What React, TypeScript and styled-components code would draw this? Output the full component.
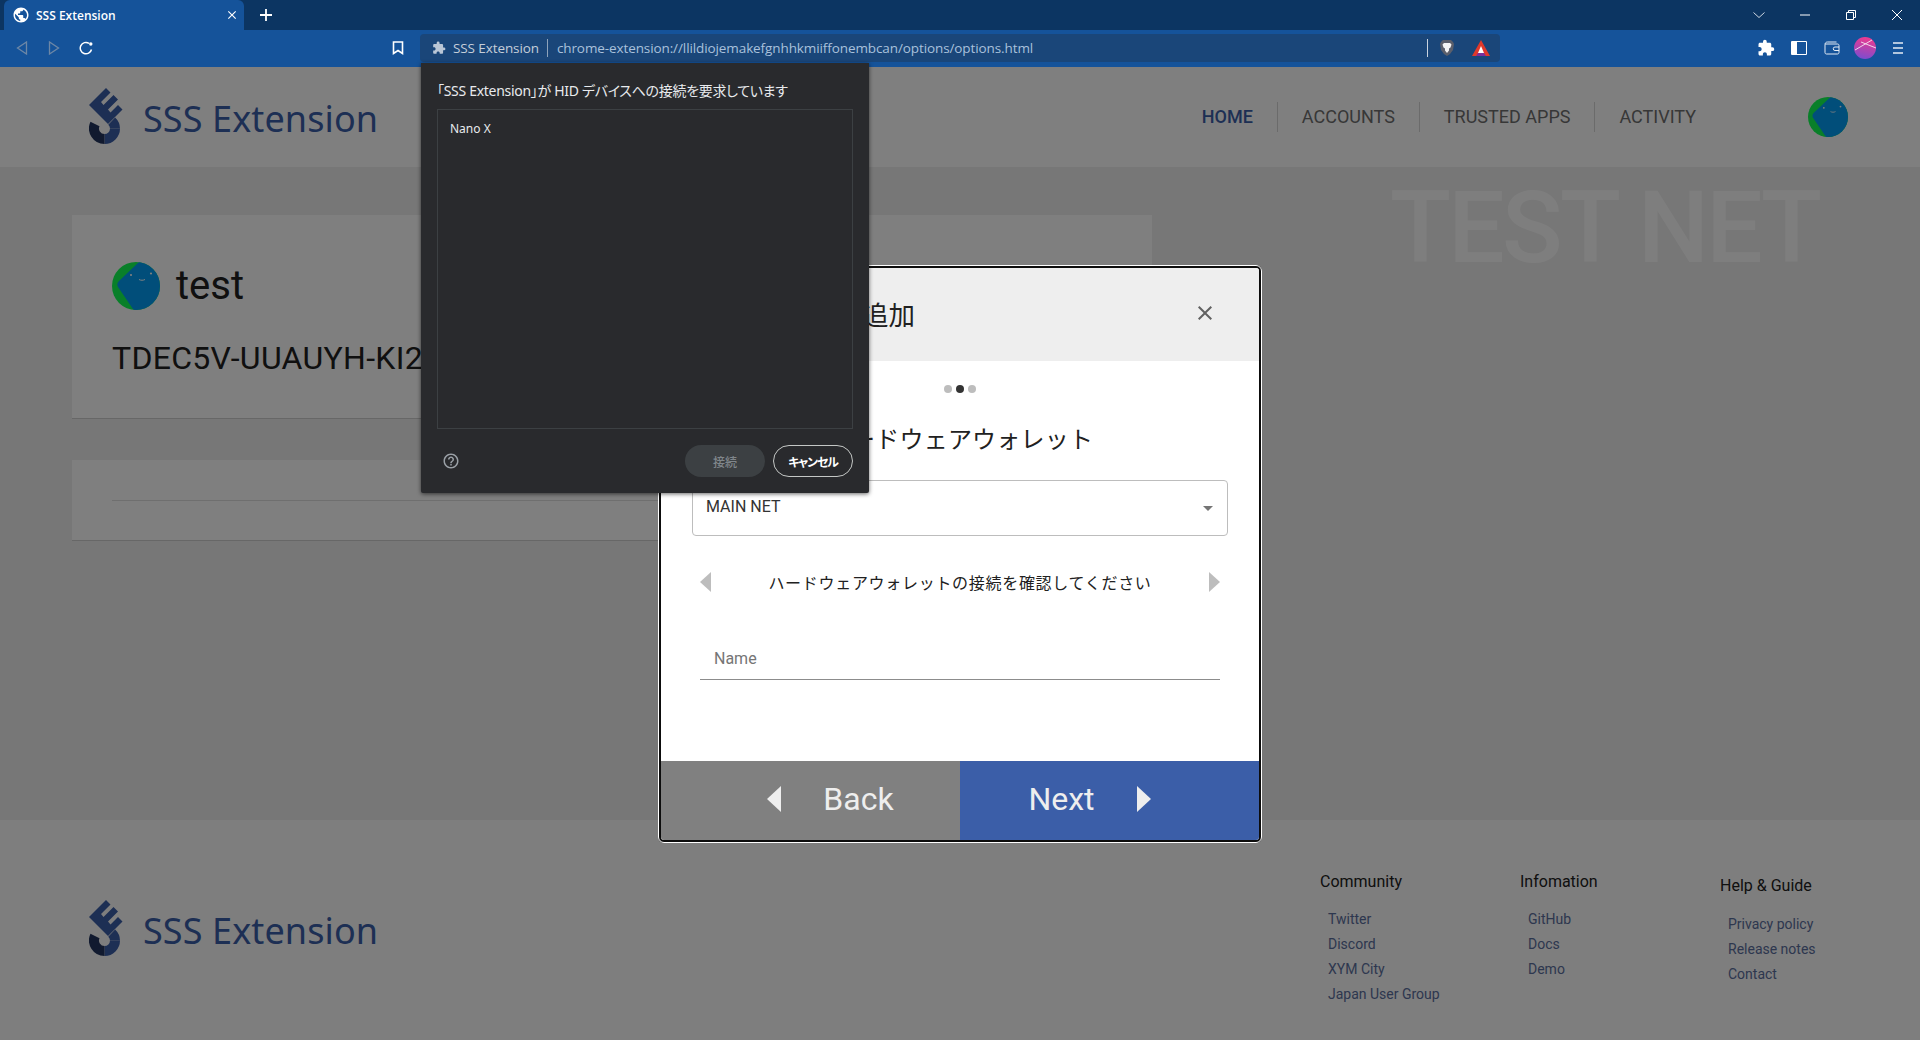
import React from 'react';
import styled, { createGlobalStyle } from 'styled-components';
import { MdExtension, MdOutlineHelpOutline, MdClose, MdPublic } from 'react-icons/md';

const GlobalStyle = createGlobalStyle`
  html, body {
    margin: 0;
    padding: 0;
    height: 100%;
    overflow: hidden;
    background: #eeeeee;
    font-family: Roboto, "Noto Sans CJK JP", sans-serif;
  }
  * {
    box-sizing: border-box;
  }
`;

const Root = styled.div`
  width: 1920px;
  height: 1040px;
  display: flex;
  flex-direction: column;
  position: relative;
  overflow: hidden;
`;

/* browser chrome */
const TabStrip = styled.div`
  height: 30px;
  flex: none;
  background: #0c3562;
  display: flex;
  align-items: stretch;
  padding-left: 4px;
  color: #fff;
`;

const Tab = styled.div`
  width: 240px;
  background: #15539a;
  border-radius: 6px 6px 0 0;
  display: flex;
  align-items: center;
  padding: 0 5px 0 8px;
  gap: 6px;
`;

const TabTitle = styled.span`
  flex: 1;
  font: 600 12px "Open Sans", "Noto Sans", sans-serif;
  color: #fff;
`;

const NewTab = styled.div`
  width: 44px;
  display: flex;
  align-items: center;
  justify-content: center;
`;

const WindowControls = styled.div`
  margin-left: auto;
  display: flex;
  align-items: center;
`;

const WindowButton = styled.div`
  width: 46px;
  height: 28px;
  display: flex;
  align-items: center;
  justify-content: center;
`;

const Toolbar = styled.div`
  height: 37px;
  flex: none;
  background: #15539a;
  display: flex;
  align-items: center;
  padding-bottom: 1px;
  color: #fff;
`;

const NavButtons = styled.div`
  display: flex;
  align-items: center;
  width: 420px;
  padding-left: 6px;
`;

const ToolButton = styled.div`
  width: 32px;
  height: 28px;
  display: flex;
  align-items: center;
  justify-content: center;
`;

const BookmarkButton = styled(ToolButton)`
  margin-left: auto;
  margin-right: 6px;
`;

const Omnibox = styled.div`
  width: 1080px;
  height: 28px;
  background: #1a4679;
  border-radius: 4px;
  display: flex;
  align-items: center;
  padding-left: 12px;
  font: 400 13.5px "Open Sans", "Noto Sans", sans-serif;
  color: #b9c6d6;
`;

const OriginName = styled.span`
  margin-left: 7px;
  color: #c5ced9;
  letter-spacing: -0.1px;
`;

const OmniDivider = styled.span`
  width: 1px;
  height: 18px;
  background: #8ea3bb;
  margin: 0 9px 0 8px;
`;

const UrlText = styled.span`
  color: #a9c1dc;
  letter-spacing: -0.1px;
`;

const ShieldGroup = styled.div`
  margin-left: auto;
  display: flex;
  align-items: center;
  gap: 18px;
  padding-right: 10px;
`;

const ShieldDivider = styled.span`
  width: 1px;
  height: 18px;
  background: #c9d3df;
  margin-right: -6px;
`;

const ToolbarRight = styled.div`
  flex: 1;
  display: flex;
  align-items: center;
  justify-content: flex-end;
  gap: 1px;
  padding-right: 6px;
`;

/* extension page */
const Page = styled.div`
  flex: 1;
  position: relative;
  display: flex;
  flex-direction: column;
  min-height: 0;
  background: #eeeeee;
`;

const Header = styled.header`
  height: 100px;
  flex: none;
  background: #fff;
  display: flex;
  align-items: center;
  padding-left: 89px;
`;

const Brand = styled.div`
  display: flex;
  align-items: center;
  gap: 20px;
`;

const BrandName = styled.span`
  padding-top: 2px;
  font: 400 36px "Noto Sans", sans-serif;
  color: #3b5ea8;
  letter-spacing: 0.1px;
  white-space: nowrap;
`;

const Nav = styled.nav`
  margin-left: auto;
  display: flex;
  align-items: center;
`;

const NavItem = styled.a<{ $active?: boolean; $last?: boolean }>`
  height: 30px;
  display: flex;
  align-items: center;
  padding: 0 24px 2px;
  font-size: 18px;
  font-weight: ${(p) => (p.$active ? 500 : 400)};
  color: ${(p) => (p.$active ? '#3b5ea8' : '#6f6f6f')};
  border-right: ${(p) => (p.$last ? 'none' : '1px solid #d6d6d6')};
`;

const NavAvatar = styled.div`
  margin: 0 72px 0 88px;
  display: flex;
`;

const Main = styled.main`
  flex: 1;
  position: relative;
  padding: 48px 0 0 72px;
  display: flex;
  flex-direction: column;
  gap: 41px;
`;

const Watermark = styled.div`
  position: absolute;
  left: 1390px;
  top: 2px;
  font-size: 100px;
  font-weight: 500;
  line-height: 117px;
  letter-spacing: -2.7px;
  color: #fdfdfd;
  white-space: nowrap;
`;

const Card = styled.section`
  width: 1080px;
  background: #fff;
  border-bottom: 1px solid #cfcfcf;
  overflow: hidden;
`;

const AccountCard = styled(Card)`
  height: 204px;
  padding: 47px 40px 0;
`;

const AccountRow = styled.div`
  display: flex;
  align-items: center;
  gap: 16px;
`;

const AccountName = styled.h2`
  margin: 0;
  font-size: 40px;
  font-weight: 400;
  line-height: 48px;
  color: #212121;
`;

const Address = styled.div`
  margin-top: 28px;
  font-size: 32px;
  line-height: 40px;
  letter-spacing: 0.3px;
  color: #212121;
  white-space: nowrap;
`;

const BalanceCard = styled(Card)`
  height: 81px;
  padding: 40px 40px 0;
`;

const BalanceRule = styled.div`
  height: 1px;
  background: #dedede;
`;

const Footer = styled.footer`
  height: 220px;
  flex: none;
  background: #fcfcfc;
  display: flex;
  padding-left: 89px;
`;

const FooterBrand = styled(Brand)`
  margin-top: -2px;
`;

const FooterColumns = styled.div`
  margin-left: auto;
  display: flex;
`;

const FooterColumn = styled.div<{ $offset?: number }>`
  width: 200px;
  padding-top: ${(p) => 52 + (p.$offset || 0)}px;
`;

const FooterHeading = styled.h3<{ $gap?: number }>`
  margin: 0 0 ${(p) => p.$gap || 15}px;
  font-size: 16px;
  font-weight: 400;
  line-height: 20px;
  color: #212121;
`;

const FooterLink = styled.a`
  display: block;
  margin-left: 8px;
  font-size: 14px;
  line-height: 25px;
  color: #5b6f9e;
  white-space: nowrap;
`;

const Dimmer = styled.div`
  position: absolute;
  inset: 0;
  background: rgba(0, 0, 0, 0.5);
  display: flex;
  align-items: center;
  justify-content: center;
`;

/* add account modal */
const Modal = styled.div`
  width: 604px;
  height: 578px;
  background: #fff;
  border: 3px solid #0d0d0d;
  outline: 1px solid #fff;
  outline-offset: -1px;
  border-radius: 6px;
  overflow: hidden;
  display: flex;
  flex-direction: column;
`;

const ModalHeader = styled.div`
  height: 93px;
  flex: none;
  background: #eeeeee;
  display: flex;
  align-items: center;
  justify-content: space-between;
  padding: 0 42px 0 42px;
`;

const ModalTitle = styled.h2`
  margin: 0 0 1px;
  font: 400 26.5px "Noto Sans CJK JP", sans-serif;
  color: #212121;
`;

const CloseButton = styled.div`
  color: #616161;
  display: flex;
  margin-top: -2px;
`;

const ModalBody = styled.div`
  flex: 1;
  display: flex;
  flex-direction: column;
  align-items: center;
  padding-top: 24px;
`;

const Dots = styled.div`
  display: flex;
  gap: 4px;
  height: 8px;
`;

const Dot = styled.span<{ $active?: boolean }>`
  width: 8px;
  height: 8px;
  border-radius: 50%;
  background: ${(p) => (p.$active ? '#333' : '#bdbdbd')};
`;

const StepTitle = styled.h3`
  margin: 27px 0 0;
  font: 400 24px/36px "Noto Sans CJK JP", sans-serif;
  letter-spacing: 0.2px;
  color: #212121;
`;

const SelectBox = styled.div`
  width: 536px;
  height: 56px;
  margin-top: 24px;
  border: 1px solid #bdbdbd;
  border-radius: 4px;
  display: flex;
  align-items: center;
  justify-content: space-between;
  padding: 0 14px 2px 13px;
  font-size: 16px;
  color: #333;
`;

const SelectArrow = styled.span`
  width: 0;
  height: 0;
  border-left: 5px solid transparent;
  border-right: 5px solid transparent;
  border-top: 5px solid #757575;
  margin-top: 4px;
`;

const Carousel = styled.div`
  width: 520px;
  height: 20px;
  margin-top: 36px;
  display: flex;
  align-items: center;
  justify-content: space-between;
`;

const CarouselText = styled.span`
  font: 400 16px "Noto Sans CJK JP", sans-serif;
  letter-spacing: 0.7px;
  color: #212121;
`;

const Arrow = styled.span<{ $dir: 'left' | 'right'; $size: number; $color: string }>`
  width: 0;
  height: 0;
  border-top: ${(p) => p.$size}px solid transparent;
  border-bottom: ${(p) => p.$size}px solid transparent;
  ${(p) =>
    p.$dir === 'left'
      ? `border-right: ${Math.round(p.$size * 1.05)}px solid ${p.$color};`
      : `border-left: ${Math.round(p.$size * 1.05)}px solid ${p.$color};`}
`;

const NameField = styled.div`
  width: 520px;
  height: 40px;
  margin-top: 48px;
  border-bottom: 1px solid #8c8c8c;
  padding: 9px 0 0 14px;
  font-size: 16px;
  line-height: 20px;
  color: #757575;
`;

const ModalFooter = styled.div`
  height: 79px;
  flex: none;
  display: flex;
`;

const FooterAction = styled.div<{ $primary?: boolean }>`
  flex: 1;
  background: ${(p) => (p.$primary ? '#3b5ea8' : '#808080')};
  color: #eeeeee;
  font-size: 32px;
  display: flex;
  align-items: center;
  justify-content: center;
  gap: 42px;
  padding: ${(p) => (p.$primary ? '0 40px 2px 0' : '0 0 2px 40px')};
`;

/* Chrome HID device chooser */
const Chooser = styled.div`
  position: absolute;
  left: 421px;
  top: 63px;
  width: 448px;
  height: 430px;
  background: #292a2d;
  border-radius: 0 0 2px 2px;
  box-shadow: 0 1px 4px rgba(0, 0, 0, 0.6);
  padding: 18px 16px 16px;
  display: flex;
  flex-direction: column;
  font-family: "Noto Sans", "Noto Sans CJK JP", sans-serif;
`;

const ChooserTitle = styled.div`
  font-size: 14px;
  line-height: 20px;
  font-feature-settings: 'palt';
  letter-spacing: -0.3px;
  color: #e8eaed;
  white-space: nowrap;
`;

const DeviceList = styled.div`
  height: 320px;
  flex: none;
  margin-top: 8px;
  border: 1px solid #3c4043;
  padding: 10px 12px;
  font-size: 12px;
  line-height: 18px;
  color: #e8eaed;
`;

const ChooserFooter = styled.div`
  flex: 1;
  display: flex;
  align-items: flex-end;
  gap: 8px;
  color: #9aa0a6;
`;

const HelpIcon = styled.div`
  margin: 0 auto 7px 5px;
  display: flex;
`;

const PillButton = styled.div<{ $disabled?: boolean }>`
  width: 80px;
  height: 32px;
  border-radius: 16px;
  display: flex;
  align-items: center;
  justify-content: center;
  font: ${(p) => (p.$disabled ? 500 : 700)} 12px "Noto Sans CJK JP", sans-serif;
  font-feature-settings: 'palt';
  letter-spacing: ${(p) => (p.$disabled ? '0' : '-1.2px')};
  background: ${(p) => (p.$disabled ? '#3c4043' : 'transparent')};
  color: ${(p) => (p.$disabled ? '#80868b' : '#ffffff')};
  border: ${(p) => (p.$disabled ? 'none' : '1px solid #c4c7c5')};
`;

function SssLogo() {
  return (
    <svg width="34" height="58" viewBox="0 0 34 58" fill="none">
      <path
        d="M0 17 17 0l4.500 4.500-9.500 9.500 2.500 3 10-10 4.500 4.500-10 10 2.500 3L29 17l4.500 4.500L19 36 0 17Z"
        fill="#3b5ea8"
      />
      <path d="M26 40.500a10.500 10.500 0 0 1-10.500 10.500" stroke="#3b5ea8" strokeWidth="10" />
      <path d="M26 40.500c0-3-1.300-5.600-3.300-7.500" stroke="#3b5ea8" strokeWidth="10" />
      <path d="M15.500 51A10.500 10.500 0 0 1 6 36" stroke="#23355f" strokeWidth="10" />
    </svg>
  );
}

function Avatar({ size }: { size: number }) {
  return (
    <svg width={size} height={size} viewBox="0 0 48 48">
      <defs>
        <clipPath id={`avatar-${size}`}>
          <circle cx="24" cy="24" r="24" />
        </clipPath>
      </defs>
      <g clipPath={`url(#avatar-${size})`}>
        <rect width="48" height="48" fill="#12ff52" />
        <path d="M27 0h24v50H23L6 25c-1-2-1-4 1-6L27 0Z" fill="#029cf4" />
        <circle cx="19" cy="13" r="1.100" fill="#fff" />
        <circle cx="39" cy="11.500" r="1.100" fill="#fff" />
        <path d="M27 17.500c2 1 4 1 6 0" stroke="#fff" strokeWidth="1" fill="none" />
      </g>
    </svg>
  );
}

function BraveIcon() {
  return (
    <svg width="14" height="16" viewBox="0 0 14 16">
      <path d="M3 0h8l2 2 1 2-1 6-3 4-3 2-3-2-3-4-1-6 1-2 2-2Z" fill="#5b5f6b" />
      <path d="M4 3h6l1.500 1.500-1 3-1.500 1v2L7 13l-2-2.500v-2L3.500 7.500l-1-3L4 3Z" fill="#f4f4f4" />
    </svg>
  );
}

function RewardsIcon() {
  return (
    <svg width="18" height="16" viewBox="0 0 18 16">
      <path d="M9 0l9 16H0L9 0Z" fill="#e0392b" />
      <path d="M4 16l2-3h6l2 3H4Z" fill="#7b2d9b" />
      <path d="M9 6l3 7H6l3-7Z" fill="#fff" />
    </svg>
  );
}

function ProfileIcon() {
  return (
    <svg width="22" height="22" viewBox="0 0 22 22">
      <defs>
        <linearGradient id="profile-gradient" x1="0.6" y1="0" x2="0.4" y2="1">
          <stop offset="0" stopColor="#ef3a8e" />
          <stop offset="1" stopColor="#7d4ccf" />
        </linearGradient>
      </defs>
      <circle cx="11" cy="11" r="11" fill="url(#profile-gradient)" />
      <path d="M1 13 18 3M7 5l15 6" stroke="#f6e4f2" strokeWidth="0.9" />
    </svg>
  );
}

function AccountsPage() {
  return (
    <Page>
      <Header>
        <Brand>
          <SssLogo />
          <BrandName>SSS Extension</BrandName>
        </Brand>
        <Nav>
          <NavItem $active>HOME</NavItem>
          <NavItem>ACCOUNTS</NavItem>
          <NavItem>TRUSTED APPS</NavItem>
          <NavItem $last>ACTIVITY</NavItem>
        </Nav>
        <NavAvatar>
          <Avatar size={40} />
        </NavAvatar>
      </Header>
      <Main>
        <Watermark>TEST NET</Watermark>
        <AccountCard>
          <AccountRow>
            <Avatar size={48} />
            <AccountName>test</AccountName>
          </AccountRow>
          <Address>TDEC5V-UUAUYH-KI2LGQ-7XWNPA-3OBSFE-XYMTST</Address>
        </AccountCard>
        <BalanceCard>
          <BalanceRule />
        </BalanceCard>
      </Main>
      <Footer>
        <FooterBrand>
          <SssLogo />
          <BrandName>SSS Extension</BrandName>
        </FooterBrand>
        <FooterColumns>
          <FooterColumn>
            <FooterHeading>Community</FooterHeading>
            <FooterLink>Twitter</FooterLink>
            <FooterLink>Discord</FooterLink>
            <FooterLink>XYM City</FooterLink>
            <FooterLink>Japan User Group</FooterLink>
          </FooterColumn>
          <FooterColumn>
            <FooterHeading>Infomation</FooterHeading>
            <FooterLink>GitHub</FooterLink>
            <FooterLink>Docs</FooterLink>
            <FooterLink>Demo</FooterLink>
          </FooterColumn>
          <FooterColumn $offset={4}>
            <FooterHeading $gap={16}>Help &amp; Guide</FooterHeading>
            <FooterLink>Privacy policy</FooterLink>
            <FooterLink>Release notes</FooterLink>
            <FooterLink>Contact</FooterLink>
          </FooterColumn>
        </FooterColumns>
      </Footer>
      <Dimmer>
        <Modal>
          <ModalHeader>
            <ModalTitle>アカウントを追加</ModalTitle>
            <CloseButton>
              <MdClose size={24} />
            </CloseButton>
          </ModalHeader>
          <ModalBody>
            <Dots>
              <Dot />
              <Dot $active />
              <Dot />
            </Dots>
            <StepTitle>ハードウェアウォレット</StepTitle>
            <SelectBox>
              MAIN NET
              <SelectArrow />
            </SelectBox>
            <Carousel>
              <Arrow $dir="left" $size={10} $color="#bdbdbd" />
              <CarouselText>ハードウェアウォレットの接続を確認してください</CarouselText>
              <Arrow $dir="right" $size={10} $color="#bdbdbd" />
            </Carousel>
            <NameField>Name</NameField>
          </ModalBody>
          <ModalFooter>
            <FooterAction>
              <Arrow $dir="left" $size={13} $color="#eeeeee" />
              Back
            </FooterAction>
            <FooterAction $primary>
              Next
              <Arrow $dir="right" $size={13} $color="#eeeeee" />
            </FooterAction>
          </ModalFooter>
        </Modal>
      </Dimmer>
    </Page>
  );
}

export default function App() {
  return (
    <Root>
      <GlobalStyle />
      <TabStrip>
        <Tab>
          <MdPublic size={18} color="#fff" />
          <TabTitle>SSS Extension</TabTitle>
          <MdClose size={14} color="#fff" />
        </Tab>
        <NewTab>
          <svg width="14" height="14" viewBox="0 0 14 14">
            <path d="M7 1v12M1 7h12" stroke="#fff" strokeWidth="1.800" />
          </svg>
        </NewTab>
        <WindowControls>
          <WindowButton>
            <svg width="14" height="8" viewBox="0 0 14 8">
              <path d="M1.500 1.500 7 6.500l5.500-5" stroke="#cfd8e3" fill="none" />
            </svg>
          </WindowButton>
          <WindowButton>
            <svg width="10" height="2" viewBox="0 0 10 2">
              <path d="M0 1h10" stroke="#fff" />
            </svg>
          </WindowButton>
          <WindowButton>
            <svg width="10" height="10" viewBox="0 0 10 10">
              <path d="M.5 2.500h7v7h-7zM2.500 2.500v-2h7v7h-2" stroke="#fff" fill="none" />
            </svg>
          </WindowButton>
          <WindowButton>
            <svg width="10" height="10" viewBox="0 0 10 10">
              <path d="M0 0l10 10M10 0 0 10" stroke="#fff" />
            </svg>
          </WindowButton>
        </WindowControls>
      </TabStrip>
      <Toolbar>
        <NavButtons>
          <ToolButton>
            <svg width="12" height="14" viewBox="0 0 12 14">
              <path d="M10.500 1v12L1.500 7l9-6Z" stroke="#6d87a6" fill="none" strokeWidth="1.300" />
            </svg>
          </ToolButton>
          <ToolButton>
            <svg width="12" height="14" viewBox="0 0 12 14">
              <path d="M1.500 1v12l9-6-9-6Z" stroke="#6d87a6" fill="none" strokeWidth="1.300" />
            </svg>
          </ToolButton>
          <ToolButton>
            <svg width="14" height="14" viewBox="0 0 14 14">
              <path d="M12.500 8.500A5.700 5.700 0 1 1 10 2.300" stroke="#fff" strokeWidth="1.500" fill="none" />
              <circle cx="11.800" cy="3" r="1.700" fill="#fff" />
            </svg>
          </ToolButton>
          <BookmarkButton>
            <svg width="12" height="14" viewBox="0 0 12 14">
              <path d="M1.500 1h9v11.500L6 9.500l-4.500 3V1Z" stroke="#fff" strokeWidth="1.600" fill="none" />
            </svg>
          </BookmarkButton>
        </NavButtons>
        <Omnibox>
          <MdExtension size={14} color="#b9c6d6" />
          <OriginName>SSS Extension</OriginName>
          <OmniDivider />
          <UrlText>chrome-extension://llildiojemakefgnhhkmiiffonembcan/options/options.html</UrlText>
          <ShieldGroup>
            <ShieldDivider />
            <BraveIcon />
            <RewardsIcon />
          </ShieldGroup>
        </Omnibox>
        <ToolbarRight>
          <ToolButton>
            <MdExtension size={18} color="#fff" />
          </ToolButton>
          <ToolButton>
            <svg width="16" height="14" viewBox="0 0 16 14">
              <path d="M.5.500h15v13H.5z" stroke="#fff" fill="none" />
              <path d="M1 1h5v12H1z" fill="#fff" />
            </svg>
          </ToolButton>
          <ToolButton>
            <svg width="16" height="14" viewBox="0 0 16 14">
              <path d="M1 3.500c0-1.500 1-2.500 2.500-2.500h9M1 3.500v8c0 1 .7 1.500 1.500 1.500h11c1 0 1.500-.7 1.500-1.500v-7c0-.8-.5-1.500-1.500-1.500H1" stroke="#e6edf5" fill="none" />
              <path d="M15 6h-4a1.500 1.500 0 0 0 0 3.500h4" stroke="#e6edf5" fill="none" />
            </svg>
          </ToolButton>
          <ToolButton>
            <ProfileIcon />
          </ToolButton>
          <ToolButton>
            <svg width="10" height="12" viewBox="0 0 10 12">
              <path d="M0 1h10M0 6h10M0 11h10" stroke="#e6edf5" strokeWidth="1.500" />
            </svg>
          </ToolButton>
        </ToolbarRight>
      </Toolbar>
      <AccountsPage />
      <Chooser>
        <ChooserTitle>「SSS Extension」が HID デバイスへの接続を要求しています</ChooserTitle>
        <DeviceList>Nano X</DeviceList>
        <ChooserFooter>
          <HelpIcon>
            <MdOutlineHelpOutline size={18} />
          </HelpIcon>
          <PillButton $disabled>接続</PillButton>
          <PillButton>キャンセル</PillButton>
        </ChooserFooter>
      </Chooser>
    </Root>
  );
}
